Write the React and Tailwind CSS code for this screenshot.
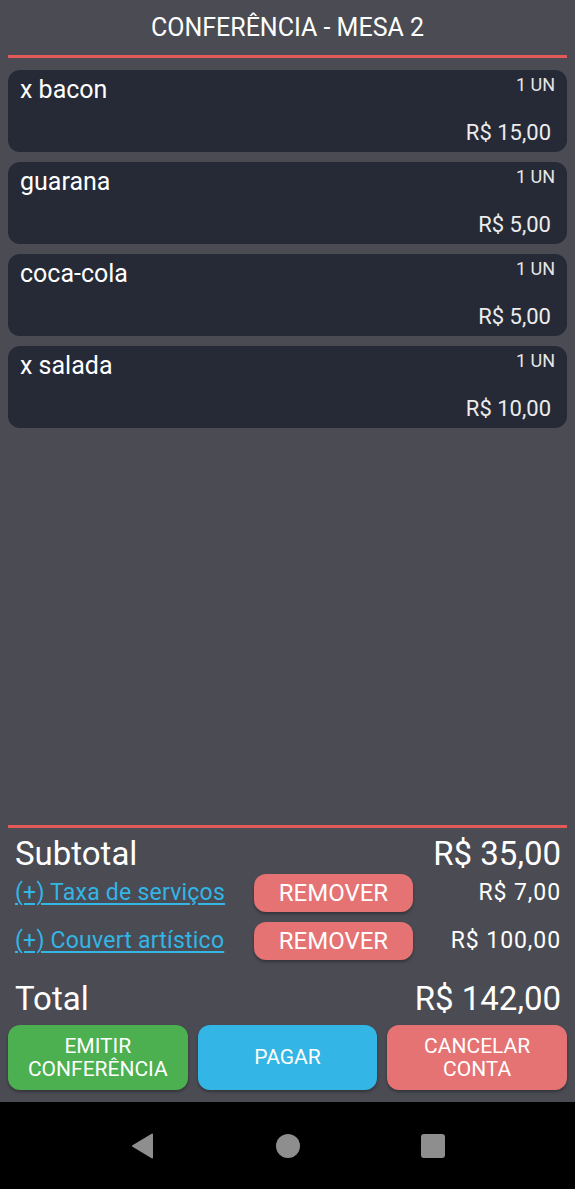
const items = [
  { name: "x bacon", qty: "1 UN", price: "R$ 15,00" },
  { name: "guarana", qty: "1 UN", price: "R$ 5,00" },
  { name: "coca-cola", qty: "1 UN", price: "R$ 5,00" },
  { name: "x salada", qty: "1 UN", price: "R$ 10,00" },
];

const extras = [
  { label: "(+) Taxa de serviços", value: "R$ 7,00" },
  { label: "(+) Couvert artístico", value: "R$ 100,00" },
];

function ItemCard({ item }) {
  return (
    <div className="h-[82px] rounded-[12px] bg-[#262a36] pl-3 pr-3 pt-[4px] pb-[6px] flex flex-col justify-between">
      <div className="flex items-start justify-between">
        <span className="text-[25px] leading-[32px] text-white">{item.name}</span>
        <span className="text-[18px] leading-[22px] text-[#e6e6e6]">{item.qty}</span>
      </div>
      <div className="text-right pr-1 text-[22px] leading-[26px] text-[#ececec]">{item.price}</div>
    </div>
  );
}

function ExtraRow({ extra }) {
  return (
    <div className="grid grid-cols-[239px_159px_1fr] items-center h-[38px]">
      <a href="#" className="text-[23px] leading-[28px] tracking-[0.01em] text-[#33b5e5] underline underline-offset-[3px] decoration-[1.5px] whitespace-nowrap">
        {extra.label}
      </a>
      <button className="h-[38px] rounded-[12px] bg-[#e57373] text-white text-[24px] shadow-[0_2px_3px_rgba(0,0,0,0.3)]">
        REMOVER
      </button>
      <span className="text-right text-[23px] tracking-[0.04em] text-white">{extra.value}</span>
    </div>
  );
}

function NavBar() {
  return (
    <div className="h-[87px] bg-black flex items-center justify-center gap-[121px]">
      <svg width="24" height="26" viewBox="0 0 24 26">
        <path d="M22 1.5 L22 24.5 Q22 26 20.6 25.2 L1.5 13.8 Q0.2 13 1.5 12.2 L20.6 0.8 Q22 0 22 1.5 Z" fill="#8e8e8e" />
      </svg>
      <div className="w-[24px] h-[24px] rounded-full bg-[#8e8e8e]" />
      <div className="w-[24px] h-[24px] rounded-[3px] bg-[#8e8e8e]" />
    </div>
  );
}

export default function App() {
  return (
    <div className="w-[575px] h-[1189px] flex flex-col" style={{ fontFamily: "Roboto, 'Noto Sans', sans-serif" }}>
      <div className="h-[1102px] bg-[#4a4b53] flex flex-col pb-[12px]">
        <div className="h-[55px] flex items-center justify-center text-white text-[25px]">
          CONFERÊNCIA - MESA 2
        </div>
        <div className="mx-2 h-[3px] bg-[#e05a57]" />
        <div className="px-2 mt-3 flex flex-col gap-[10px]">
          {items.map((item) => (
            <ItemCard key={item.name} item={item} />
          ))}
        </div>

        <div className="flex-1" />

        <div className="mx-2 h-[3px] bg-[#e05a57]" />
        <div className="pt-[7px] pl-[15px] pr-[14px]">
          <div className="h-[38px] flex items-center justify-between text-white text-[33px]">
            <span>Subtotal</span>
            <span>R$ 35,00</span>
          </div>
          <div className="h-[1px]" />
          <ExtraRow extra={extras[0]} />
          <div className="h-[10px]" />
          <ExtraRow extra={extras[1]} />
          <div className="mt-[19px] h-[40px] flex items-center justify-between text-white text-[33px]">
            <span>Total</span>
            <span>R$ 142,00</span>
          </div>
        </div>
        <div className="mt-[6px] px-2 grid grid-cols-3 gap-[10px]">
          <button className="h-[65px] rounded-[12px] bg-[#4caf50] text-white text-[21px] leading-[23px] shadow-[0_2px_3px_rgba(0,0,0,0.3)]">
            EMITIR
            <br />
            CONFERÊNCIA
          </button>
          <button className="h-[65px] rounded-[12px] bg-[#33b5e5] text-white text-[21px] leading-[23px] shadow-[0_2px_3px_rgba(0,0,0,0.3)]">
            PAGAR
          </button>
          <button className="h-[65px] rounded-[12px] bg-[#e57373] text-white text-[21px] leading-[23px] shadow-[0_2px_3px_rgba(0,0,0,0.3)]">
            CANCELAR
            <br />
            CONTA
          </button>
        </div>
      </div>
      <NavBar />
    </div>
  );
}
